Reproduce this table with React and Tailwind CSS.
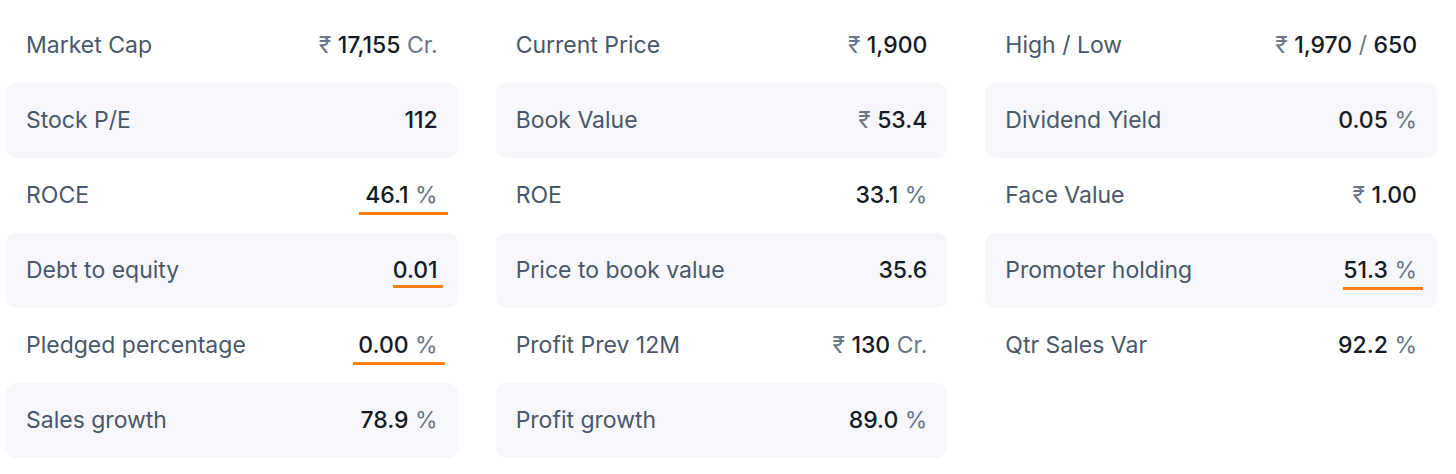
const rows = [
  [
    { label: "Market Cap", pre: "₹", value: "17,155", unit: "Cr." },
    { label: "Current Price", pre: "₹", value: "1,900" },
    { label: "High / Low", pre: "₹", value: "1,970", mid: "/", value2: "650" },
  ],
  [
    { label: "Stock P/E", value: "112" },
    { label: "Book Value", pre: "₹", value: "53.4" },
    { label: "Dividend Yield", value: "0.05", unit: "%" },
  ],
  [
    { label: "ROCE", value: "46.1", unit: "%", mark: "left-[-6px] right-[-10px] top-[34px]" },
    { label: "ROE", value: "33.1", unit: "%" },
    { label: "Face Value", pre: "₹", value: "1.00" },
  ],
  [
    { label: "Debt to equity", value: "0.01", mark: "left-0 right-[-5px] top-[32px]" },
    { label: "Price to book value", value: "35.6" },
    { label: "Promoter holding", value: "51.3", unit: "%", mark: "left-0 right-[-6px] top-[34px]" },
  ],
  [
    { label: "Pledged percentage", value: "0.00", unit: "%", mark: "left-[-5px] right-[-7px] top-[34px]" },
    { label: "Profit Prev 12M", pre: "₹", value: "130", unit: "Cr." },
    { label: "Qtr Sales Var", value: "92.2", unit: "%" },
  ],
  [
    { label: "Sales growth", value: "78.9", unit: "%" },
    { label: "Profit growth", value: "89.0", unit: "%" },
    null,
  ],
];

function Value({ item }) {
  return (
    <span className="relative whitespace-nowrap font-medium text-[#151a23]">
      {item.pre && <span className="font-normal text-[#6b7686]">{item.pre} </span>}
      {item.value}
      {item.mid && <span className="font-normal text-[#6b7686]"> {item.mid} </span>}
      {item.value2}
      {item.unit && <span className="font-normal text-[#6b7686]"> {item.unit}</span>}
      {item.mark && <span className={`absolute h-[3px] bg-[#ff7f11] ${item.mark}`} />}
    </span>
  );
}

export default function App() {
  return (
    <div className="min-h-[474px] bg-white pl-[6px] pt-[8px] font-['Inter',sans-serif] text-[23px]">
      <div className="grid w-[1431px] grid-cols-3 gap-x-[38px]">
        {rows.map((row, r) =>
          row.map((item, c) =>
            item ? (
              <div
                key={`${r}-${c}`}
                className={`flex h-[75px] items-center justify-between rounded-[10px] px-5 ${r % 2 === 1 ? "bg-[#f7f7fb]" : ""}`}
              >
                <span className="text-[#4a5768]">{item.label}</span>
                <Value item={item} />
              </div>
            ) : (
              <div key={`${r}-${c}`} />
            )
          )
        )}
      </div>
    </div>
  );
}
